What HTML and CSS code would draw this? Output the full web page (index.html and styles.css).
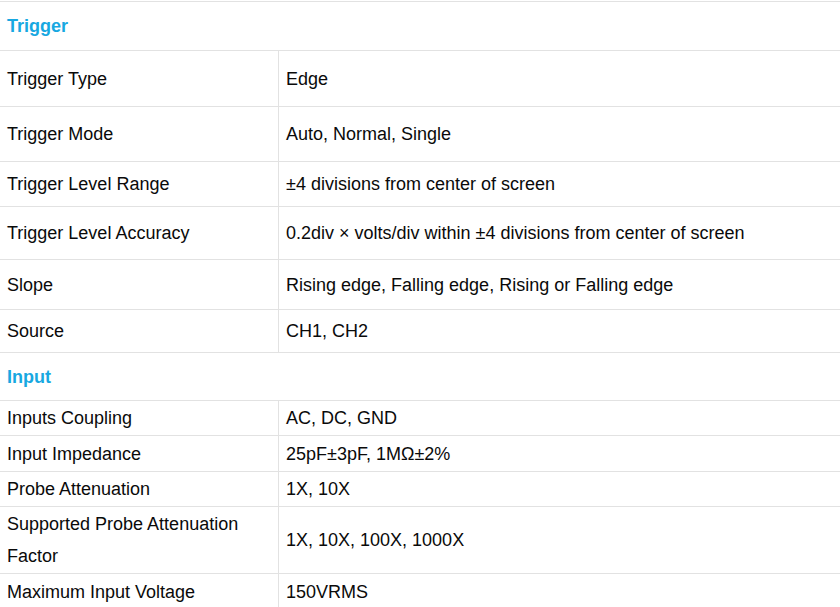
FILE: index.html
```html
<!DOCTYPE html>
<html lang="en">
<head>
    <meta charset="UTF-8">
    <meta name="viewport" content="width=device-width, initial-scale=1.0">
    <title>Specifications</title>
    <link rel="stylesheet" href="styles.css">
</head>
<body>
    <table class="specs">
        <tr class="section">
            <th colspan="2">Trigger</th>
        </tr>
        <tr class="r56">
            <td>Trigger Type</td>
            <td>Edge</td>
        </tr>
        <tr class="r55">
            <td>Trigger Mode</td>
            <td>Auto, Normal, Single</td>
        </tr>
        <tr class="r45">
            <td>Trigger Level Range</td>
            <td>±4 divisions from center of screen</td>
        </tr>
        <tr class="r53">
            <td>Trigger Level Accuracy</td>
            <td>0.2div × volts/div within ±4 divisions from center of screen</td>
        </tr>
        <tr class="r50">
            <td>Slope</td>
            <td>Rising edge, Falling edge, Rising or Falling edge</td>
        </tr>
        <tr class="r43">
            <td>Source</td>
            <td>CH1, CH2</td>
        </tr>
        <tr class="section section-b">
            <th colspan="2">Input</th>
        </tr>
        <tr class="r35">
            <td>Inputs Coupling</td>
            <td>AC, DC, GND</td>
        </tr>
        <tr class="r36">
            <td>Input Impedance</td>
            <td>25pF±3pF, 1MΩ±2%</td>
        </tr>
        <tr class="r35">
            <td>Probe Attenuation</td>
            <td>1X, 10X</td>
        </tr>
        <tr class="r67">
            <td class="wrap">Supported Probe Attenuation Factor</td>
            <td>1X, 10X, 100X, 1000X</td>
        </tr>
        <tr class="r36">
            <td>Maximum Input Voltage</td>
            <td>150VRMS</td>
        </tr>
    </table>
</body>
</html>
```

FILE: styles.css
```css
body {
    margin: 0;
    padding-top: 1px;
    background: #fff;
    font-family: "Liberation Sans", Arial, sans-serif;
    color: #0a0a0a;
}

.specs {
    width: 840px;
    border-collapse: collapse;
    font-size: 18px;
}

.specs th,
.specs td {
    border-top: 1px solid #e2e2e2;
    border-bottom: 1px solid #e2e2e2;
    padding: 0 7px;
    vertical-align: middle;
    text-align: left;
    line-height: 22px;
}

.specs td:first-child {
    width: 264px;
    border-right: 1px solid #e2e2e2;
}

.specs td:last-child {
    padding-left: 7px;
}

.section th {
    height: 48px;
    color: #17a8e1;
    font-weight: bold;
}

.section-b th {
    height: 47px;
}

.specs .wrap {
    line-height: 32px;
}

.r56 td { height: 55px; }
.r55 td { height: 54px; }
.r53 td { height: 52px; }
.r50 td { height: 49px; }
.r45 td { height: 44px; }
.r43 td { height: 42px; }
.r36 td { height: 35px; }
.r35 td { height: 34px; }
.r67 td { height: 66px; }
```
